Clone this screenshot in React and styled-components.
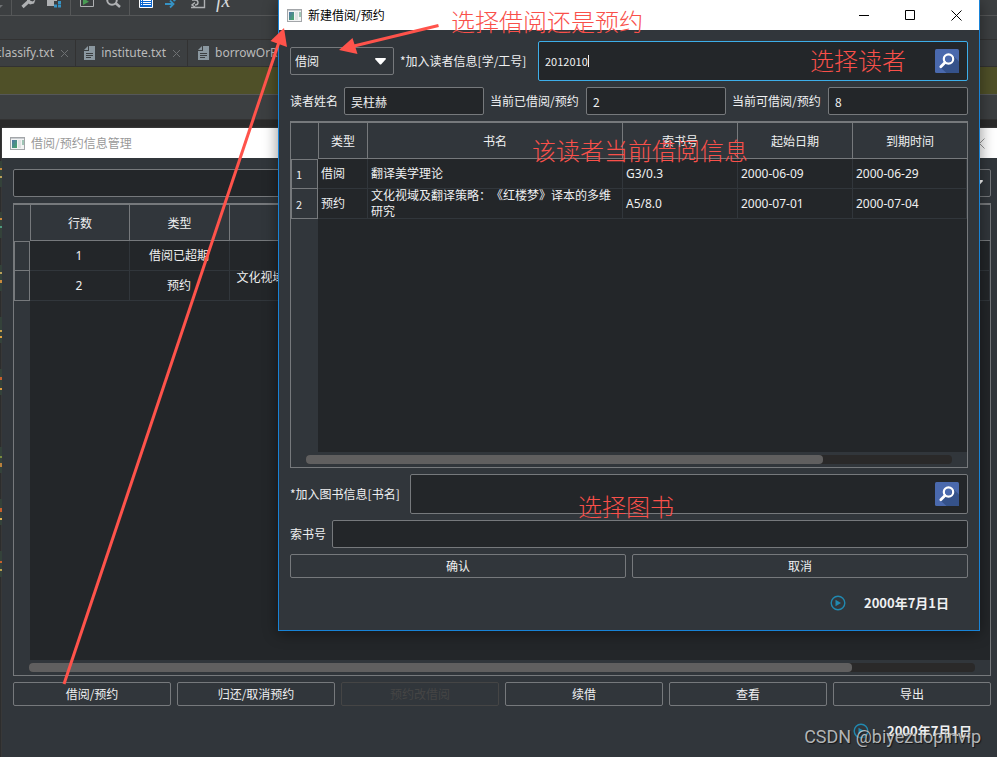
import { useState } from "react";
import styled, { createGlobalStyle } from "styled-components";

const GlobalStyle = createGlobalStyle`
  * { box-sizing: border-box; }
  body {
    margin: 0;
    background: #2b2b2b;
    font-family: "Noto Sans CJK SC", "Noto Sans", sans-serif;
    font-size: 12px;
    line-height: 16px;
    color: #eff0f1;
    text-spacing-trim: space-all;
  }
  button, input, select { font: inherit; color: inherit; }
`;

const Desktop = styled.div`
  position: relative;
  display: flex;
  flex-direction: column;
  min-height: 100vh;
  overflow: hidden;
`;

/* ---------- IDE behind the windows ---------- */

const Toolbar = styled.div`
  display: flex;
  height: 16px;
  overflow: hidden;
  background: #3c3f41;
  border-bottom: 1px solid #555758;
`;

const ToolGroup = styled.div`
  display: flex;
  align-items: flex-end;
  gap: 10px;
  padding: 0 8px 5px;
  border-left: 1px solid #555758;

  &:first-child {
    width: 11px;
    padding: 0 0 5px;
    border-left: 0;
  }
`;

const ToolIcon = styled.svg`
  display: block;
  flex: none;
  width: 16px;
  height: 16px;
`;

const Formula = styled.span`
  font: italic 20px/20px "Liberation Serif", serif;
  color: #d5d7d8;
`;

const NavBar = styled.div`
  height: 24px;
  background: #3c3f41;
  border-bottom: 1px solid #323232;
`;

const Tabs = styled.div`
  display: flex;
  height: 27px;
  background: #3c3f41;
  border-bottom: 1px solid #323232;
`;

const Tab = styled.div`
  display: flex;
  align-items: center;
  justify-content: flex-end;
  gap: 6px;
  flex: none;
  width: ${(p) => p.$width || "auto"};
  padding: 0 6px 0 10px;
  overflow: hidden;
  border-right: 1px solid #323232;
  font-family: "Noto Sans", sans-serif;
  font-size: 12px;
  color: #bbbbbb;
  white-space: nowrap;

  svg { flex: none; }
`;

const Banner = styled.div`
  height: 28px;
  background: #4f5028;
  border-bottom: 1px solid #555758;
`;

const Breadcrumb = styled.div`
  height: 25px;
  background: #3c3f41;
  border-bottom: 1px solid #323232;
`;

const Editor = styled.div`
  flex: 1;
  background: #2b2b2b;
`;

/* ---------- windows ---------- */

const Window = styled.section`
  position: absolute;
  display: flex;
  flex-direction: column;
  background: #31363b;
`;

const BackWindow = styled(Window)`
  top: 128px;
  right: -5px;
  bottom: -1px;
  left: 2px;
  box-shadow: 0 0 2px #555;
`;

const FrontWindow = styled(Window)`
  top: 0;
  right: 17px;
  left: 278px;
  border: 1px solid #1883d7;
  border-top: 0;
  box-shadow: 0 2px 14px rgba(0, 0, 0, 0.45);
`;

const TitleBar = styled.header`
  display: flex;
  align-items: center;
  gap: 6px;
  height: 30px;
  padding-left: 8px;
  background: #ffffff;
  color: ${(p) => (p.$active ? "#000000" : "#999999")};
`;

const Title = styled.h1`
  flex: 1;
  margin: 0;
  font-size: 12px;
  font-weight: 400;
`;

const WindowButtons = styled.div`
  display: flex;
`;

const WindowButton = styled.button`
  display: grid;
  place-items: center;
  width: 46px;
  height: 30px;
  padding: 0;
  border: 0;
  background: none;
`;

const Body = styled.div`
  display: flex;
  flex: 1;
  flex-direction: column;
  gap: 6px;
  padding: 11px 11px 0;
`;

const Row = styled.div`
  display: flex;
  align-items: center;
  gap: 6px;
`;

const Label = styled.label`
  flex: none;
  min-width: ${(p) => p.$width || "0"};
  white-space: nowrap;
`;

const Field = styled.input`
  flex: 1;
  min-width: 0;
  height: 28px;
  padding: 0 6px;
  border: 1px solid #76797c;
  border-radius: 2px;
  outline: 0;
  background: #232629;
  font-size: 12px;
`;

const SearchBox = styled.div`
  display: flex;
  align-items: center;
  flex: 1;
  min-width: 0;
  height: 40px;
  padding: 0 8px 0 6px;
  border: 1px solid ${(p) => (p.$active ? "#3daee9" : "#76797c")};
  border-radius: 2px;
  background: #232629;
`;

const SearchInput = styled.input`
  field-sizing: content;
  min-width: 1px;
  padding: 0;
  border: 0;
  outline: 0;
  background: none;
  font-size: 11px;
  caret-color: transparent;
`;

const Caret = styled.span`
  width: 1px;
  height: 12px;
  background: #eff0f1;
`;

const SearchButton = styled.button`
  width: 24px;
  height: 24px;
  margin-left: auto;
  padding: 0;
  border: 0;
  background: none;

  svg { display: block; }
`;

const SelectWrap = styled.div`
  position: relative;
  flex: none;
  width: 104px;

  svg {
    position: absolute;
    top: 11px;
    right: 8px;
    pointer-events: none;
  }
`;

const Select = styled.select`
  appearance: none;
  display: block;
  width: 100%;
  height: 28px;
  padding: 0 4px;
  border: 1px solid #76797c;
  border-radius: 2px;
  background: #31363b;
`;

const Button = styled.button`
  flex: 1;
  height: 24px;
  padding: 0;
  border: 1px solid #76797c;
  border-radius: 2px;
  background: #31363b;

  &:disabled {
    border-color: #454545;
    color: #454545;
  }
`;

const TableFrame = styled.div`
  display: flex;
  flex: 1;
  flex-direction: column;
  min-height: 347px;
  border: 1px solid #76797c;
`;

const TableView = styled.div`
  flex: 1;
  overflow: hidden;
  background: linear-gradient(to right, #31363b ${(p) => p.$gutter}, #232629 ${(p) => p.$gutter});
`;

const Table = styled.table`
  width: 100%;
  table-layout: fixed;
  border-collapse: separate;
  border-spacing: 0;
`;

const HeadCell = styled.th`
  height: 37px;
  padding: 0;
  border: 1px solid #76797c;
  border-left-width: 0;
  background: #31363b;
  font-weight: 400;

  &:nth-child(2) { border-left-width: 1px; }
  &:last-child { border-right-width: 0; }
`;

const CornerCell = styled.td`
  padding: 0;
  border-top: 1px solid #76797c;
  background: #31363b;
`;

const RowHead = styled.th`
  padding: 0 4px;
  border: 1px solid #76797c;
  border-top-width: ${(p) => (p.$first ? "1px" : "0")};
  background: #31363b;
  font-size: 11px;
  font-weight: 400;
  text-align: left;
`;

const Cell = styled.td`
  height: 30px;
  padding: 0 4px 0 3px;
  border-right: 1px solid #31363b;
  border-bottom: 1px solid #31363b;
  background: #232629;
  font-family: "Noto Sans", "Noto Sans CJK SC", sans-serif;
  text-align: ${(p) => (p.$center ? "center" : "left")};
`;

// two lines of text may run slightly past the row height
const CellText = styled.div`
  display: grid;
  align-content: center;
  height: 29px;
`;

const ScrollArea = styled.div`
  display: flex;
  align-items: center;
  height: 15px;
  padding: 0 15px;
`;

const Track = styled.div`
  flex: 1;
  height: 9px;
  border-radius: 4px;
  background: #2a2929;
`;

const Thumb = styled.div`
  width: ${(p) => p.$size};
  height: 9px;
  border-radius: 4px;
  background: #605f5f;
`;

const Footer = styled.footer`
  display: flex;
  align-items: center;
  justify-content: flex-end;
  gap: 18px;
  height: 46px;
  padding: 0 19px 8px 0;
  font-size: 13px;
  font-weight: 700;
`;

/* ---------- notes drawn over the windows ---------- */

const Notes = styled.div`
  position: absolute;
  inset: 0;
  overflow: hidden;
  pointer-events: none;
`;

const Note = styled.span`
  position: absolute;
  top: ${(p) => p.$top};
  left: ${(p) => p.$left};
  font-family: "Noto Sans CJK SC", sans-serif;
  font-size: 24px;
  font-weight: 300;
  line-height: 28px;
  color: #f9504a;
  white-space: nowrap;
`;

const Arrows = styled.svg`
  position: absolute;
  top: 0;
  left: 0;
`;

const Watermark = styled.span`
  position: absolute;
  right: 16px;
  bottom: 9px;
  font-family: Roboto, "Liberation Sans", sans-serif;
  font-size: 18px;
  line-height: 22px;
  color: rgba(205, 207, 208, 0.85);
  text-shadow: 1px 1px 1px rgba(0, 0, 0, 0.6);
`;

const FileIcon = () => (
  <svg width="11" height="14" viewBox="0 0 11 14">
    <path d="M5 0h6v14H0V5h5z" fill="#8b98a0" />
    <path d="M4 0v4H0z" fill="#8b98a0" />
    <path d="M2 7.5h7M2 9.5h7M2 11.5h5" stroke="#3c3f41" />
  </svg>
);

const TabClose = () => (
  <svg width="9" height="9" viewBox="0 0 9 9">
    <path d="M1 1l7 7M8 1L1 8" stroke="#6e7173" />
  </svg>
);

const AppIcon = () => (
  <svg width="15" height="13" viewBox="0 0 15 13">
    <defs>
      <linearGradient id="pane" x1="0" y1="0" x2="1" y2="1">
        <stop offset="0" stopColor="#5074a8" />
        <stop offset="1" stopColor="#48a868" />
      </linearGradient>
    </defs>
    <rect x=".5" y=".5" width="14" height="12" fill="#f3f4f4" stroke="#a3a6a9" />
    <path d="M1 1.5h13" stroke="#c8ccd0" />
    <rect x="2" y="3" width="5" height="8" fill="url(#pane)" />
    <rect x="8" y="3" width="3" height="8" fill="#dfe2e2" />
    <rect x="12" y="3" width="2" height="5" fill="#9fc5b5" />
  </svg>
);

const ArrowDown = () => (
  <svg width="11" height="7" viewBox="0 0 11 7">
    <path d="M0 1q0-1 1-1h9q1 0 1 1L6.5 6q-1 1-2 0z" fill="#ffffff" />
  </svg>
);

const SearchIcon = () => (
  <svg width="24" height="24" viewBox="0 0 24 24">
    <rect width="24" height="24" rx="1.5" fill="#4a69ad" />
    <path d="M17.5 6L24 12.5V24H11.5L5.5 18.5z" fill="#35528a" />
    <circle cx="13.5" cy="10" r="3.2" fill="#4a69ad" />
    <circle cx="13.5" cy="10" r="4.7" fill="none" stroke="#fff" strokeWidth="2.2" />
    <path d="M10 13.5L5.8 17.7" stroke="#fff" strokeWidth="2.8" strokeLinecap="round" />
  </svg>
);

const PlayIcon = () => (
  <svg width="16" height="16" viewBox="0 0 16 16">
    <circle cx="8" cy="8" r="6.8" fill="none" stroke="#2189b0" strokeWidth="1.4" />
    <path d="M5.5 4.8L11 8l-5.5 3.2z" fill="#2189b0" />
  </svg>
);

const IdeToolbar = () => (
  <Toolbar>
    <ToolGroup>
      <ToolIcon viewBox="13 0 16 16"><path d="M8 11h8l-4 4z" fill="#6e7173" /></ToolIcon>
    </ToolGroup>
    <ToolGroup>
      <ToolIcon viewBox="0 0 16 16">
        <path d="M2.5 13L9 7" stroke="#afb1b3" strokeWidth="3.2" />
        <path d="M7 4v4l3 2.5 4-1 1.500-4-3 2-2.500-1V3z" fill="#afb1b3" />
      </ToolIcon>
      <ToolIcon viewBox="0 0 16 16">
        <path d="M1 3h10v4H8v5H1z" fill="#afb1b3" />
        <path d="M12 7h3v3h-3zM8 10.500h3v3H8zM12 10.500h3v3h-3z" fill="#3592c4" />
      </ToolIcon>
    </ToolGroup>
    <ToolGroup>
      <ToolIcon viewBox="0 0 16 16">
        <path d="M1.5 1.5h13v11h-13z" fill="none" stroke="#afb1b3" />
        <path d="M4 4l6 3.8L4 11z" fill="#499c54" />
      </ToolIcon>
      <ToolIcon viewBox="0 0 16 16">
        <circle cx="7" cy="6" r="4.8" fill="none" stroke="#afb1b3" strokeWidth="2" />
        <path d="M10.5 9L15 13" stroke="#afb1b3" strokeWidth="2.4" />
      </ToolIcon>
    </ToolGroup>
    <ToolGroup>
      <ToolIcon viewBox="0 0 16 16">
        <path d="M1.5 1.5h13v12h-13z" fill="#0b66d0" stroke="#fff" />
        <path d="M3 6.5h1M5 6.5h8M3 8.5h1M5 8.5h8M3 10.5h1M5 10.5h8" stroke="#fff" />
      </ToolIcon>
      <ToolIcon viewBox="0 0 16 16">
        <path d="M1 10h7M6 6.5L9.5 10 6 13.5M9.5 7l2.5-2" fill="none" stroke="#3592c4" strokeWidth="1.8" />
      </ToolIcon>
      <ToolIcon viewBox="0 0 16 16">
        <path d="M2 6h3q3 0 3 2.5T5 11M1 13.5h13.500V2M5 8.500L2 11l3 2" fill="none" stroke="#afb1b3" strokeWidth="1.4" />
      </ToolIcon>
      <Formula>fx</Formula>
    </ToolGroup>
  </Toolbar>
);

const EditorTab = ({ name, width }) => (
  <Tab $width={width}>
    <FileIcon />
    <span>{name}</span>
    <TabClose />
  </Tab>
);

const TitleRow = ({ title, active }) => (
  <TitleBar $active={active}>
    <AppIcon />
    <Title>{title}</Title>
    <WindowButtons>
      <WindowButton aria-label="最小化">
        <svg width="11" height="11"><path d="M0 5.5h10" stroke="currentColor" /></svg>
      </WindowButton>
      <WindowButton aria-label="最大化">
        <svg width="11" height="11">
          <path d="M.5.5h9v9h-9z" fill="none" stroke="currentColor" />
        </svg>
      </WindowButton>
      <WindowButton aria-label="关闭">
        <svg width="11" height="11"><path d="M.5.5l10 10M10.5.5l-10 10" stroke="currentColor" /></svg>
      </WindowButton>
    </WindowButtons>
  </TitleBar>
);

const Grid = ({ columns, rows, gutter, thumb, numbered, center }) => (
  <TableFrame>
    <TableView $gutter={gutter}>
      <Table>
        <colgroup>
          <col width={parseInt(gutter)} />
          {columns.map((c) => (
            <col key={c.name} width={c.width} />
          ))}
        </colgroup>
        <thead>
          <tr>
            <CornerCell />
            {columns.map((c) => (
              <HeadCell key={c.name} scope="col">{c.name}</HeadCell>
            ))}
          </tr>
        </thead>
        <tbody>
          {rows.map((row, i) => (
            <tr key={i}>
              <RowHead scope="row" $first={i === 0}>{numbered ? i + 1 : ""}</RowHead>
              {row.map((text, j) => (
                <Cell key={j} $center={center}>
                  <CellText>{text}</CellText>
                </Cell>
              ))}
            </tr>
          ))}
        </tbody>
      </Table>
    </TableView>
    <ScrollArea>
      <Track>
        <Thumb $size={thumb} />
      </Track>
    </ScrollArea>
  </TableFrame>
);

const DateFooter = () => (
  <Footer>
    <PlayIcon />
    <time dateTime="2000-07-01">2000年7月1日</time>
  </Footer>
);

const BOOK = "文化视域及翻译策略：《红楼梦》译本的多维研究";

const listColumns = [
  { name: "行数", width: 100 },
  { name: "类型", width: 100 },
  { name: "书名", width: 255 },
  { name: "" },
];

const listRows = [
  ["1", "借阅已超期", "翻译美学理论", ""],
  ["2", "预约", BOOK, ""],
];

const borrowColumns = [
  { name: "类型", width: 50 },
  { name: "书名" },
  { name: "索书号", width: 115 },
  { name: "起始日期", width: 115 },
  { name: "到期时间", width: 114 },
];

const borrowRows = [
  ["借阅", "翻译美学理论", "G3/0.3", "2000-06-09", "2000-06-29"],
  ["预约", BOOK, "A5/8.0", "2000-07-01", "2000-07-04"],
];

const ManageWindow = () => (
  <BackWindow>
    <TitleRow title="借阅/预约信息管理" />
    <Body>
      <Row>
        <Field aria-label="搜索" />
        <SelectWrap>
          <Select aria-label="筛选" />
          <ArrowDown />
        </SelectWrap>
      </Row>
      <Grid columns={listColumns} rows={listRows} gutter="16px" thumb="87%" center />
      <Row>
        <Button>借阅/预约</Button>
        <Button>归还/取消预约</Button>
        <Button disabled>预约改借阅</Button>
        <Button>续借</Button>
        <Button>查看</Button>
        <Button>导出</Button>
      </Row>
      <DateFooter />
    </Body>
  </BackWindow>
);

const BorrowWindow = () => {
  const [reader, setReader] = useState("2012010");
  const [book, setBook] = useState("");

  return (
    <FrontWindow>
      <TitleRow title="新建借阅/预约" active />
      <Body>
        <Row>
          <SelectWrap>
            <Select aria-label="类型" defaultValue="借阅">
              <option>借阅</option>
              <option>预约</option>
            </Select>
            <ArrowDown />
          </SelectWrap>
          <Label htmlFor="reader" $width="132px">*加入读者信息[学/工号]</Label>
          <SearchBox $active>
            <SearchInput id="reader" value={reader} onChange={(e) => setReader(e.target.value)} />
            <Caret />
            <SearchButton aria-label="选择读者"><SearchIcon /></SearchButton>
          </SearchBox>
        </Row>
        <Row>
          <Label htmlFor="name">读者姓名</Label>
          <Field id="name" defaultValue="吴柱赫" />
          <Label htmlFor="used" $width="90px">当前已借阅/预约</Label>
          <Field id="used" defaultValue="2" />
          <Label htmlFor="left" $width="90px">当前可借阅/预约</Label>
          <Field id="left" defaultValue="8" />
        </Row>
        <Grid columns={borrowColumns} rows={borrowRows} gutter="27px" thumb="80%" numbered />
        <Row>
          <Label htmlFor="book" $width="114px">*加入图书信息[书名]</Label>
          <SearchBox>
            <SearchInput id="book" value={book} onChange={(e) => setBook(e.target.value)} />
            <SearchButton aria-label="选择图书"><SearchIcon /></SearchButton>
          </SearchBox>
        </Row>
        <Row>
          <Label htmlFor="code">索书号</Label>
          <Field id="code" />
        </Row>
        <Row>
          <Button>确认</Button>
          <Button>取消</Button>
        </Row>
        <DateFooter />
      </Body>
    </FrontWindow>
  );
};

// y, height and colour of the code edge left of the window
const codeEdge = [
  [161, 26, "#34423a"], [168, 2, "#c98a3c"], [176, 2, "#b9a05a"],
  [212, 26, "#34423a"], [218, 2, "#d08a3c"], [226, 2, "#4f9a80"],
  [265, 26, "#34423a"], [272, 2, "#b9a05a"], [280, 3, "#c98a3c"],
  [317, 26, "#34423a"], [330, 2, "#c8a04a"], [336, 2, "#e0a040"],
  [369, 26, "#34423a"], [377, 3, "#c9602c"], [388, 2, "#e09a3c"],
  [447, 26, "#34423a"], [456, 2, "#7a8a40"], [463, 4, "#b9803c"],
  [499, 26, "#34423a"], [508, 4, "#c9602c"], [518, 2, "#e0b050"],
  [551, 26, "#34423a"], [561, 2, "#c9602c"], [569, 2, "#b9a050"],
];

const App = () => {
  return (
    <>
      <GlobalStyle />
      <Desktop>
        <IdeToolbar />
        <NavBar />
        <Tabs>
          <EditorTab name="classify.txt" width="76px" />
          <EditorTab name="institute.txt" width="112px" />
          <EditorTab name="borrowOrReserve.txt" />
        </Tabs>
        <Banner />
        <Breadcrumb />
        <Editor />
        <ManageWindow />
        <BorrowWindow />
        <Notes>
          <Arrows width="460" height="700">
            {codeEdge.map(([y, h, fill]) => (
              <rect key={y} x="0" y={y} width="2" height={h} fill={fill} />
            ))}
            <path d="M64 684L279 42" stroke="#ff534b" strokeWidth="3" />
            <path d="M284 28l-13.5 13L287 47z" fill="#ff534b" />
            <path d="M438.5 25.5L354 46" stroke="#ff534b" strokeWidth="3" />
            <path d="M339 50l13.5-12 5 16z" fill="#ff534b" />
          </Arrows>
          <Note $top="7px" $left="451px">选择借阅还是预约</Note>
          <Note $top="46px" $left="810px">选择读者</Note>
          <Note $top="136px" $left="532px">该读者当前借阅信息</Note>
          <Note $top="492px" $left="578px">选择图书</Note>
          <Watermark>CSDN @biyezuopinvip</Watermark>
        </Notes>
      </Desktop>
    </>
  );
};

export default App;
